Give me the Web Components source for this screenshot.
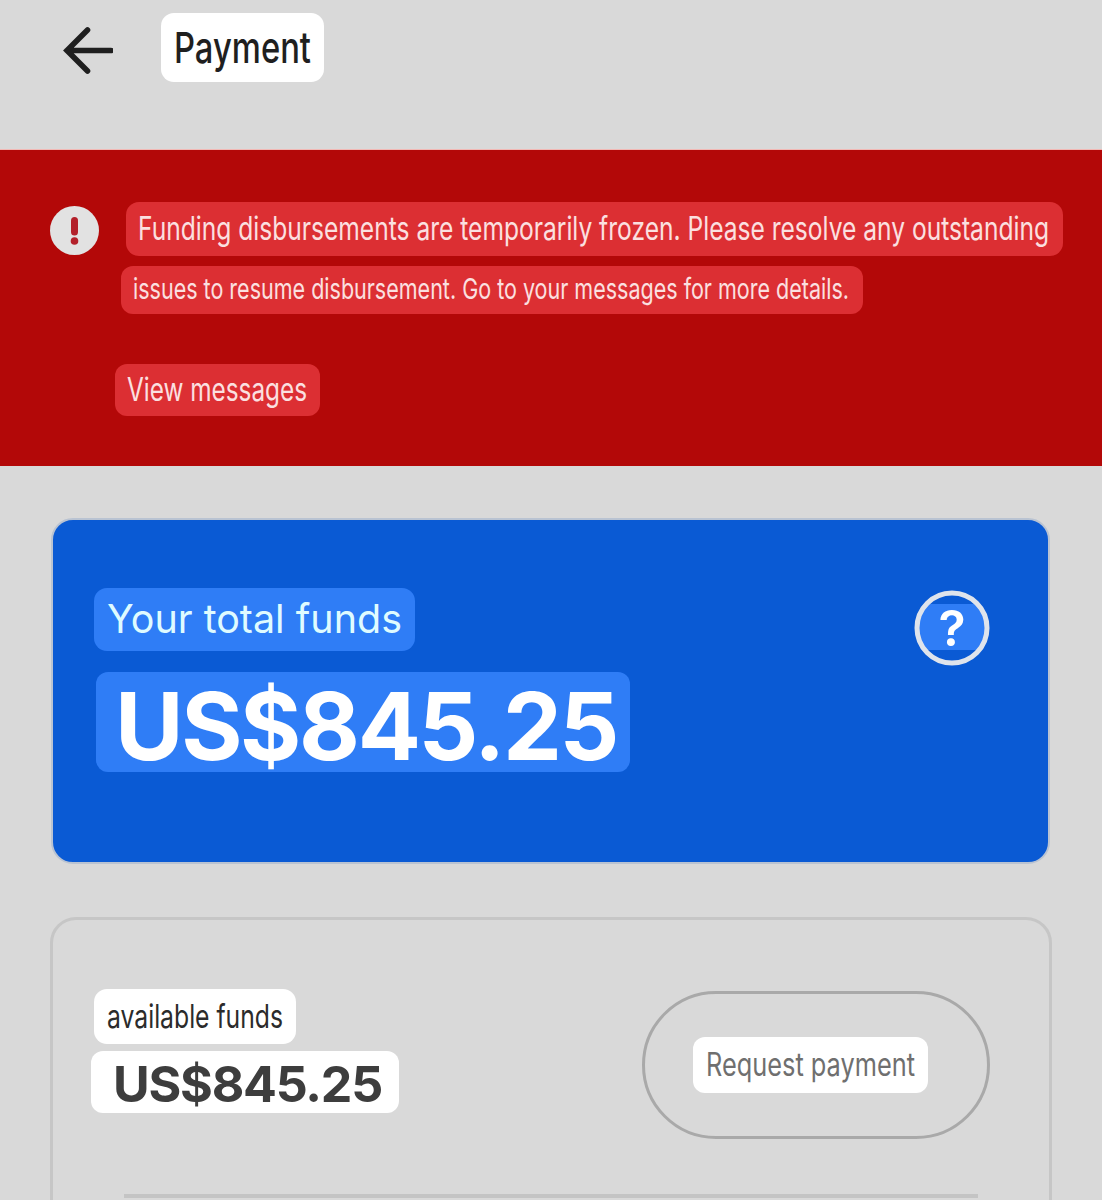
<!DOCTYPE html>
<html lang="en"><head><meta charset="utf-8"><title>Payment</title>
<style>
html,body{margin:0;padding:0;background:#d9d9d9}
body{height:1200px;overflow:hidden;font-family:Inter,"Liberation Sans",sans-serif}
</style></head><body>
<payment-page>
  <app-header>
    <text-pill w="163" h="69" x="13" tw="137" size="43" weight="450" color="#1f1f1f" bg="#fff" r="13">Payment</text-pill>
  </app-header>
  <alert-banner>
    <text-pill slot="l1" w="937" h="54" x="12" tw="911" size="32" color="#fbe0e0" bg="#dc2f33" r="13">Funding disbursements are temporarily frozen. Please resolve any outstanding</text-pill>
    <text-pill slot="l2" w="742" h="48" x="12" y="-1" tw="716" size="29" color="#fbe0e0" bg="#dc2f33" r="12">issues to resume disbursement. Go to your messages for more details.</text-pill>
    <text-pill slot="l3" w="205" h="52" x="12" tw="180" size="32" color="#fbe0e0" bg="#dc2f33" r="12">View messages</text-pill>
  </alert-banner>
  <funds-card>
    <text-pill slot="label" w="321" h="63" x="13" y="-1" tw="295" size="40" color="#dffbff" bg="#2f7df6" r="13">Your total funds</text-pill>
    <text-pill slot="amount" w="534" h="100" x="19" y="4" ls="-0.025" tw="502" size="94" weight="700" color="#fff" bg="#2f7df6" r="12">US$845.25</text-pill>
  </funds-card>
  <balance-card>
    <text-pill slot="label" w="202" h="55" x="13" tw="176" size="33" color="#2b2b2b" bg="#fff" r="13">available funds</text-pill>
    <text-pill slot="amount" w="308" h="62" x="22" y="2" ls="-0.025" tw="269" size="50" weight="700" color="#3d3d3d" bg="#fff" r="12">US$845.25</text-pill>
    <text-pill slot="action" w="235" h="56" x="13" tw="209" size="32" color="#6f6f6f" bg="#fff" r="12">Request payment</text-pill>
  </balance-card>
</payment-page>
<script>
function shadow(el,html){el.attachShadow({mode:'open'}).innerHTML=html}
class PaymentPage extends HTMLElement{constructor(){super();shadow(this,`<style>:host{display:block;width:1102px;height:1200px;overflow:hidden;background:#d9d9d9}</style><slot></slot>`)}}
class AppHeader extends HTMLElement{constructor(){super();shadow(this,`<style>
:host{display:flex;box-sizing:border-box;height:150px;padding:13px 0 0 62px;align-items:flex-start;gap:48px}
svg{display:block;margin-top:13px}
</style><svg width="51" height="48" viewBox="0 0 51 48" aria-hidden="true"><path d="M49 24.500H5M25.500 4L5 24.500L25.500 45" fill="none" stroke="#1f1f1f" stroke-width="5.600" stroke-linecap="round" stroke-linejoin="miter"/></svg><slot></slot>`)}}
class AlertBanner extends HTMLElement{constructor(){super();shadow(this,`<style>
:host{display:flex;box-sizing:border-box;height:316px;background:#b30808;padding:52px 0 0 50px;gap:16px;align-items:flex-start;box-shadow:0 -1px 0 #f2b8b4}
svg{display:block;margin-top:4px;flex:none}
.col{display:flex;flex-direction:column;align-items:flex-start}
::slotted([slot=l1]){margin-left:11px}
::slotted([slot=l2]){margin:10px 0 0 6px}
::slotted([slot=l3]){margin-top:50px}
</style><svg width="49" height="49" viewBox="0 0 49 49" aria-hidden="true"><circle cx="24.500" cy="24.500" r="24.500" fill="#e2e2e2"/><path d="M24.500 14.500V26" stroke="#b3202a" stroke-width="7" stroke-linecap="round"/><circle cx="24.500" cy="35" r="3.800" fill="#b3202a"/></svg>
<div class="col"><slot name="l1"></slot><slot name="l2"></slot><slot name="l3"></slot></div>`)}}
class FundsCard extends HTMLElement{constructor(){super();shadow(this,`<style>
:host{display:flex;box-sizing:border-box;width:999px;height:346px;margin:52px 0 0 51px;background:#0a5ad4;border:2px solid #b9c3d2;border-radius:22px;padding:68px 58px 0 41px;justify-content:space-between;align-items:flex-start}
.col{display:flex;flex-direction:column;align-items:flex-start}
::slotted([slot=amount]){margin:21px 0 0 2px}
svg{display:block;margin-top:2px}
text{font-family:Inter,"Liberation Sans",sans-serif;font-weight:600;font-size:50px}
</style><div class="col"><slot name="label"></slot><slot name="amount"></slot></div>
<svg width="76" height="76" viewBox="0 0 76 76" aria-hidden="true"><defs><clipPath id="c"><circle cx="38" cy="38" r="35"/></clipPath></defs><circle cx="38" cy="38" r="35" fill="#0a5ad4"/><rect x="0" y="14" width="76" height="46" fill="#2f7df6" clip-path="url(#c)"/><circle cx="38" cy="38" r="35" fill="none" stroke="#dfe4ec" stroke-width="5"/><text x="38" y="56" text-anchor="middle" fill="#fff">?</text></svg>`)}}
class BalanceCard extends HTMLElement{constructor(){super();shadow(this,`<style>
:host{display:block;box-sizing:border-box;width:1002px;height:420px;margin:53px 0 0 50px;border:3px solid #c6c6c6;border-radius:26px;padding:69px 0 0 0}
.row{display:flex;justify-content:space-between;align-items:flex-start;height:150px;padding:0 59px 0 38px}
.col{display:flex;flex-direction:column;align-items:flex-start}
::slotted([slot=label]){margin-left:3px}
::slotted([slot=amount]){margin-top:7px}
.btn{box-sizing:border-box;width:348px;height:148px;margin-top:2px;border:3px solid #a9a9a9;border-radius:74px;display:flex;align-items:center;justify-content:center;padding-right:11px}
hr{border:0;height:4px;background:#c4c4c4;width:854px;margin:55px 0 0 71px}
</style><div class="row"><div class="col"><slot name="label"></slot><slot name="amount"></slot></div><div class="btn"><slot name="action"></slot></div></div><hr>`)}}
class TextPill extends HTMLElement{
  constructor(){super();shadow(this,`<style>
:host{display:flex;box-sizing:border-box;align-items:center;flex:none}
span{display:inline-block;white-space:nowrap;line-height:1.2;transform-origin:0 50%}
</style><span><slot></slot></span>`)}
  connectedCallback(){
    const a=n=>this.getAttribute(n),s=this.style,t=this.shadowRoot.querySelector('span');
    s.width=a('w')+'px';s.height=a('h')+'px';s.background=a('bg');s.color=a('color');s.borderRadius=a('r')+'px';s.paddingLeft=a('x')+'px';
    s.fontFamily='Inter,"Liberation Sans",sans-serif';s.fontSize=a('size')+'px';s.fontWeight=a('weight')||'400';
    if(a('ls'))s.letterSpacing=a('ls')+'em';
    const n=t.getBoundingClientRect().width;
    if(n>0)t.style.transform='translateY('+(a('y')||0)+'px) scaleX('+(a('tw')/n)+')';
  }
}
customElements.define('payment-page',PaymentPage);
customElements.define('app-header',AppHeader);
customElements.define('alert-banner',AlertBanner);
customElements.define('funds-card',FundsCard);
customElements.define('balance-card',BalanceCard);
customElements.define('text-pill',TextPill);
</script></body></html>
